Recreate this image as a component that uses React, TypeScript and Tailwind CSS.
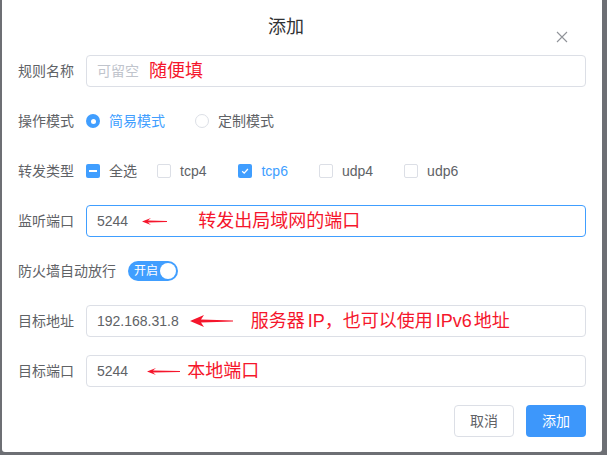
import React from "react";

const FONT = {
  fontFamily: '"Liberation Sans", "Noto Sans CJK SC", sans-serif',
};

type ArrowProps = { width: number; height: number; thick?: boolean };

function RedArrow({ width, height, thick }: ArrowProps) {
  const mid = height / 2;
  const head = thick ? 14 : 9;
  const shaft = thick ? 1.2 : 0.7;
  return (
    <svg width={width} height={height} viewBox={`0 0 ${width} ${height}`}>
      <path
        d={`M0 ${mid} L${head} 0 L${head - 3} ${mid - shaft - 0.4} L${width} ${mid - 0.6} L${width} ${mid + 0.6} L${head - 3} ${mid + shaft + 0.4} L${head} ${height} Z`}
        fill="#f5162c"
      />
    </svg>
  );
}

function FieldLabel({ children }: { children: React.ReactNode }) {
  return (
    <span className="min-w-[68px] shrink-0 pr-3 text-[14px] text-[#606266]">
      {children}
    </span>
  );
}

function FakeInput({
  focused,
  children,
}: {
  focused?: boolean;
  children: React.ReactNode;
}) {
  return (
    <div
      className={
        focused
          ? "flex h-[32px] flex-1 items-center rounded-[4px] border border-[#409eff] pl-[10px] text-[14px] text-[#606266]"
          : "flex h-[32px] flex-1 items-center rounded-[4px] border border-[#dcdfe6] pl-[10px] text-[14px] text-[#606266]"
      }
    >
      {children}
    </div>
  );
}

function Note({ children }: { children: React.ReactNode }) {
  return <span className="text-[18px] text-[#f5162c]">{children}</span>;
}

function Checkbox({ state }: { state: "off" | "on" | "half" }) {
  if (state === "off") {
    return (
      <span className="h-[14px] w-[14px] shrink-0 rounded-[2px] border border-[#dcdfe6] bg-white" />
    );
  }
  return (
    <span className="flex h-[14px] w-[14px] shrink-0 items-center justify-center rounded-[2px] bg-[#409eff]">
      {state === "half" ? (
        <span className="h-[2px] w-[8px] bg-white" />
      ) : (
        <svg width="10" height="10" viewBox="0 0 10 10">
          <path
            d="M2.2 5.2 L4.2 7.1 L7.9 3"
            fill="none"
            stroke="white"
            strokeWidth="1.3"
          />
        </svg>
      )}
    </span>
  );
}

// spacing before each protocol checkbox, tuned to the screenshot
const protocols = [
  { name: "tcp4", checked: false, gap: "ml-[20px]" },
  { name: "tcp6", checked: true, gap: "ml-[32px]" },
  { name: "udp4", checked: false, gap: "ml-[31px]" },
  { name: "udp6", checked: false, gap: "ml-[31px]" },
];

export default function App() {
  return (
    <div className="h-screen w-full bg-[#6d6f74]" style={FONT}>
      <div className="ml-[2px] flex h-[452px] w-[600px] flex-col rounded-b-[3px] bg-white">
        <div className="relative flex h-[55px] items-start justify-center pr-[32px] pt-[14px]">
          <span className="text-[18px] leading-[26px] text-[#303133]">添加</span>
          <svg
            className="absolute right-[34px] top-[31px]"
            width="12"
            height="12"
            viewBox="0 0 12 12"
          >
            <path
              d="M1 1 L11 11 M11 1 L1 11"
              stroke="#909399"
              strokeWidth="1.1"
            />
          </svg>
        </div>

        <div className="flex flex-col gap-[18px] px-4">
          <div className="flex h-[32px] items-center">
            <FieldLabel>规则名称</FieldLabel>
            <FakeInput>
              <span className="text-[#c0c4cc]">可留空</span>
              <span className="ml-[10px]">
                <Note>随便填</Note>
              </span>
            </FakeInput>
          </div>

          <div className="flex h-[32px] items-center">
            <FieldLabel>操作模式</FieldLabel>
            <span className="flex items-center">
              <span className="flex h-[14px] w-[14px] items-center justify-center rounded-full bg-[#409eff]">
                <span className="h-[5px] w-[5px] rounded-full bg-white" />
              </span>
              <span className="ml-[9px] text-[14px] text-[#409eff]">简易模式</span>
            </span>
            <span className="ml-[30px] flex items-center">
              <span className="h-[14px] w-[14px] rounded-full border border-[#dcdfe6]" />
              <span className="ml-[9px] text-[14px] text-[#606266]">定制模式</span>
            </span>
          </div>

          <div className="flex h-[32px] items-center">
            <FieldLabel>转发类型</FieldLabel>
            <span className="flex items-center">
              <Checkbox state="half" />
              <span className="ml-[9px] text-[14px] text-[#606266]">全选</span>
            </span>
            {protocols.map((p) => (
              <span key={p.name} className={`${p.gap} flex items-center`}>
                <Checkbox state={p.checked ? "on" : "off"} />
                <span
                  className={
                    p.checked
                      ? "ml-[9px] text-[14px] text-[#409eff]"
                      : "ml-[9px] text-[14px] text-[#606266]"
                  }
                >
                  {p.name}
                </span>
              </span>
            ))}
          </div>

          <div className="flex h-[32px] items-center">
            <FieldLabel>监听端口</FieldLabel>
            <FakeInput focused>
              <span>5244</span>
              <span className="ml-[14px] flex items-center">
                <RedArrow width={25} height={7} />
              </span>
              <span className="ml-[31px]">
                <Note>转发出局域网的端口</Note>
              </span>
            </FakeInput>
          </div>

          <div className="flex h-[32px] items-center">
            <FieldLabel>防火墙自动放行</FieldLabel>
            <span className="flex h-[20px] w-[50px] items-center justify-between rounded-full bg-[#409eff] pl-[6px] pr-[2px]">
              <span className="text-[12px] leading-none text-white">开启</span>
              <span className="h-[16px] w-[16px] rounded-full bg-white" />
            </span>
          </div>

          <div className="flex h-[32px] items-center">
            <FieldLabel>目标地址</FieldLabel>
            <FakeInput>
              <span>192.168.31.8</span>
              <span className="ml-[11px] flex items-center">
                <RedArrow width={43} height={12} thick />
              </span>
              <span className="ml-[18px] flex items-center">
                <Note>服务器</Note>
                <span className="ml-[3px]">
                  <Note>IP，也可以使用</Note>
                </span>
                <span className="ml-[3px]">
                  <Note>IPv6</Note>
                </span>
                <span className="ml-[2px]">
                  <Note>地址</Note>
                </span>
              </span>
            </FakeInput>
          </div>

          <div className="flex h-[32px] items-center">
            <FieldLabel>目标端口</FieldLabel>
            <FakeInput>
              <span>5244</span>
              <span className="ml-[19px] flex items-center">
                <RedArrow width={33} height={7} />
              </span>
              <span className="ml-[7px]">
                <Note>本地端口</Note>
              </span>
            </FakeInput>
          </div>

          <div className="flex h-[32px] items-center justify-end gap-3">
            <button className="h-[32px] w-[60px] rounded-[4px] border border-[#dcdfe6] bg-white text-[14px] text-[#606266]">
              取消
            </button>
            <button className="h-[32px] w-[60px] rounded-[4px] bg-[#3d97fb] text-[14px] text-white">
              添加
            </button>
          </div>
        </div>
      </div>
    </div>
  );
}
